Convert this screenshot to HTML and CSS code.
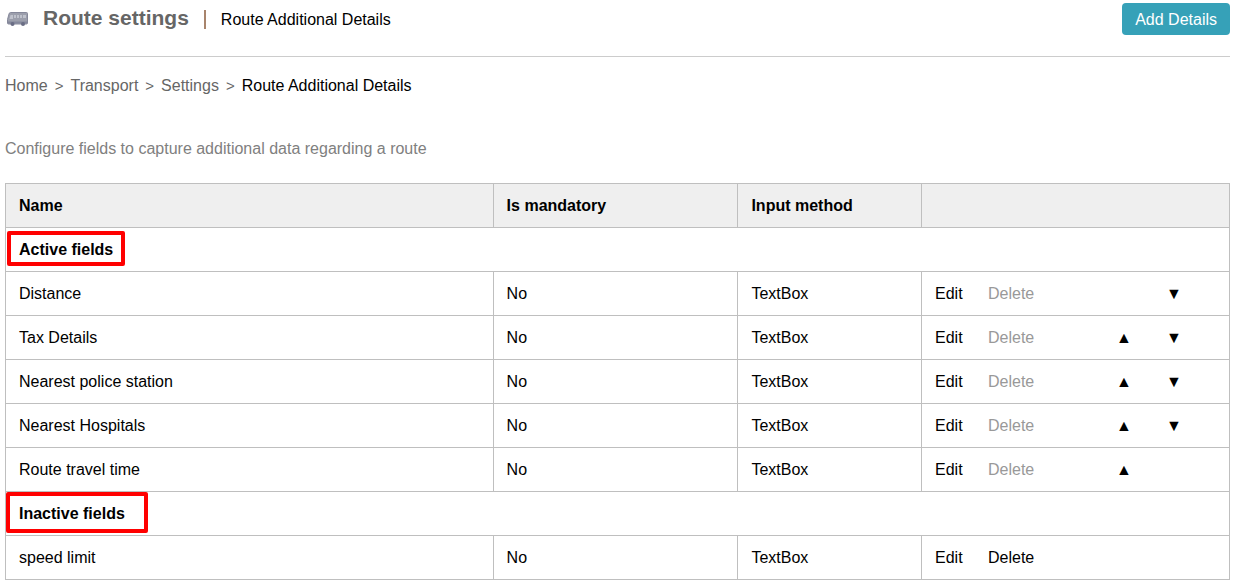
FILE: index.html
```
<!DOCTYPE html>
<html lang="en">
<head>
    <meta charset="UTF-8">
    <meta name="viewport" content="width=device-width, initial-scale=1.0">
    <title>Route Additional Details</title>
    <link rel="stylesheet" href="styles.css">
</head>
<body>
    <header class="page-header">
        <svg class="bus-icon" width="22" height="16" viewBox="0 0 22 16" aria-hidden="true">
            <path d="M3.500 1.500H19.500Q20.500 1.500 20.500 2.500V12Q20.500 13 19.500 13H1.500Q0.500 13 0.500 12V8.500L2 3Q2.300 1.500 3.500 1.500Z" fill="#9c9fac" stroke="#85889a"/>
            <path d="M1 10.500H20V12.500H1Z" fill="#85889c"/>
            <path d="M3.500 4H6V8H2.500ZM7 4H9V7H7ZM10 4H12V7H10ZM13 4H15V7H13ZM16 4H19V7H16Z" fill="#bfc2cc"/>
            <circle cx="5.500" cy="13" r="2" fill="#696d84"/>
            <circle cx="16" cy="13" r="2" fill="#696d84"/>
        </svg>
        <h1 class="title">Route settings</h1>
        <span class="divider"></span>
        <span class="subtitle">Route Additional Details</span>
        <button class="add-btn" type="button">Add Details</button>
    </header>

    <nav class="breadcrumb" aria-label="Breadcrumb">
        <a href="#">Home</a>
        <span class="sep">&gt;</span>
        <a href="#">Transport</a>
        <span class="sep">&gt;</span>
        <a href="#">Settings</a>
        <span class="sep">&gt;</span>
        <span class="current">Route Additional Details</span>
    </nav>

    <p class="description">Configure fields to capture additional data regarding a route</p>

    <table class="fields">
        <thead>
            <tr>
                <th class="col-name">Name</th>
                <th class="col-mandatory">Is mandatory</th>
                <th class="col-method">Input method</th>
                <th class="col-actions"></th>
            </tr>
        </thead>
        <tbody>
            <tr>
                <th class="group" colspan="4"><div class="mark mark-active">Active fields</div></th>
            </tr>
            <tr>
                <td>Distance</td>
                <td>No</td>
                <td>TextBox</td>
                <td>
                    <div class="actions">
                        <a href="#">Edit</a>
                        <span class="disabled">Delete</span>
                        <a class="down" href="#">▼</a>
                    </div>
                </td>
            </tr>
            <tr>
                <td>Tax Details</td>
                <td>No</td>
                <td>TextBox</td>
                <td>
                    <div class="actions">
                        <a href="#">Edit</a>
                        <span class="disabled">Delete</span>
                        <a class="up" href="#">▲</a>
                        <a class="down" href="#">▼</a>
                    </div>
                </td>
            </tr>
            <tr>
                <td>Nearest police station</td>
                <td>No</td>
                <td>TextBox</td>
                <td>
                    <div class="actions">
                        <a href="#">Edit</a>
                        <span class="disabled">Delete</span>
                        <a class="up" href="#">▲</a>
                        <a class="down" href="#">▼</a>
                    </div>
                </td>
            </tr>
            <tr>
                <td>Nearest Hospitals</td>
                <td>No</td>
                <td>TextBox</td>
                <td>
                    <div class="actions">
                        <a href="#">Edit</a>
                        <span class="disabled">Delete</span>
                        <a class="up" href="#">▲</a>
                        <a class="down" href="#">▼</a>
                    </div>
                </td>
            </tr>
            <tr>
                <td>Route travel time</td>
                <td>No</td>
                <td>TextBox</td>
                <td>
                    <div class="actions">
                        <a href="#">Edit</a>
                        <span class="disabled">Delete</span>
                        <a class="up" href="#">▲</a>
                    </div>
                </td>
            </tr>
            <tr>
                <th class="group" colspan="4"><div class="mark mark-inactive">Inactive fields</div></th>
            </tr>
            <tr>
                <td>speed limit</td>
                <td>No</td>
                <td>TextBox</td>
                <td>
                    <div class="actions">
                        <a href="#">Edit</a>
                        <a href="#">Delete</a>
                    </div>
                </td>
            </tr>
        </tbody>
    </table>
</body>
</html>
```
FILE: styles.css
```
* {
    box-sizing: border-box;
}

body {
    margin: 0;
    padding: 0 6px 0 5px;
    background-color: #fff;
    color: #000;
    font-family: Arial, "Liberation Sans", sans-serif;
    font-size: 16px;
    line-height: 19px;
}

a {
    color: inherit;
    text-decoration: none;
}

.page-header {
    display: flex;
    align-items: center;
    height: 57px;
    padding-bottom: 18px;
    border-bottom: 1px solid #ccc;
}

.bus-icon {
    margin: 0 14px 0 2px;
}

.title {
    margin: 0;
    padding-bottom: 2px;
    color: #666;
    font-size: 21px;
    line-height: 24px;
}

.divider {
    width: 2px;
    height: 19px;
    margin: 0 15px;
    background-color: #a8846c;
}

.add-btn {
    height: 32px;
    margin-left: auto;
    padding: 0 13px;
    border: none;
    border-radius: 4px;
    background-color: #36a1b8;
    color: #fff;
    font: inherit;
}

.breadcrumb {
    display: flex;
    gap: 7px;
    padding: 19px 0 44px;
    color: #666;
}

.breadcrumb .sep {
    font-size: 15px;
}

.breadcrumb .current {
    color: #000;
}

.description {
    margin: 0 0 25px;
    color: #808080;
}

.fields {
    width: 100%;
    border-collapse: collapse;
    table-layout: fixed;
}

.fields th,
.fields td {
    padding: 12px 13px;
    border: 1px solid #bfbfbf;
    text-align: left;
}

.fields thead th {
    background-color: #efefef;
}

.col-mandatory {
    width: 20%;
}

.col-method {
    width: 15%;
}

.fields .col-actions {
    width: 308px;
}

.fields .group {
    padding: 0;
}

/* red outline around the group names */
.mark {
    width: fit-content;
    border: 4px solid #f00;
    border-radius: 2px;
}

.mark-active {
    margin: 3px 1px 5px;
    padding: 5px 8px 3px;
}

.mark-inactive {
    margin-bottom: 2px;
    padding: 8px 19px 6px 9px;
}

.actions {
    display: grid;
    grid-template-columns: 53px 111px 50px 50px;
}

.disabled {
    color: #999;
}

.up,
.down {
    grid-row: 1;
    text-align: center;
}

.up {
    grid-column: 3;
}

.down {
    grid-column: 4;
}
```
